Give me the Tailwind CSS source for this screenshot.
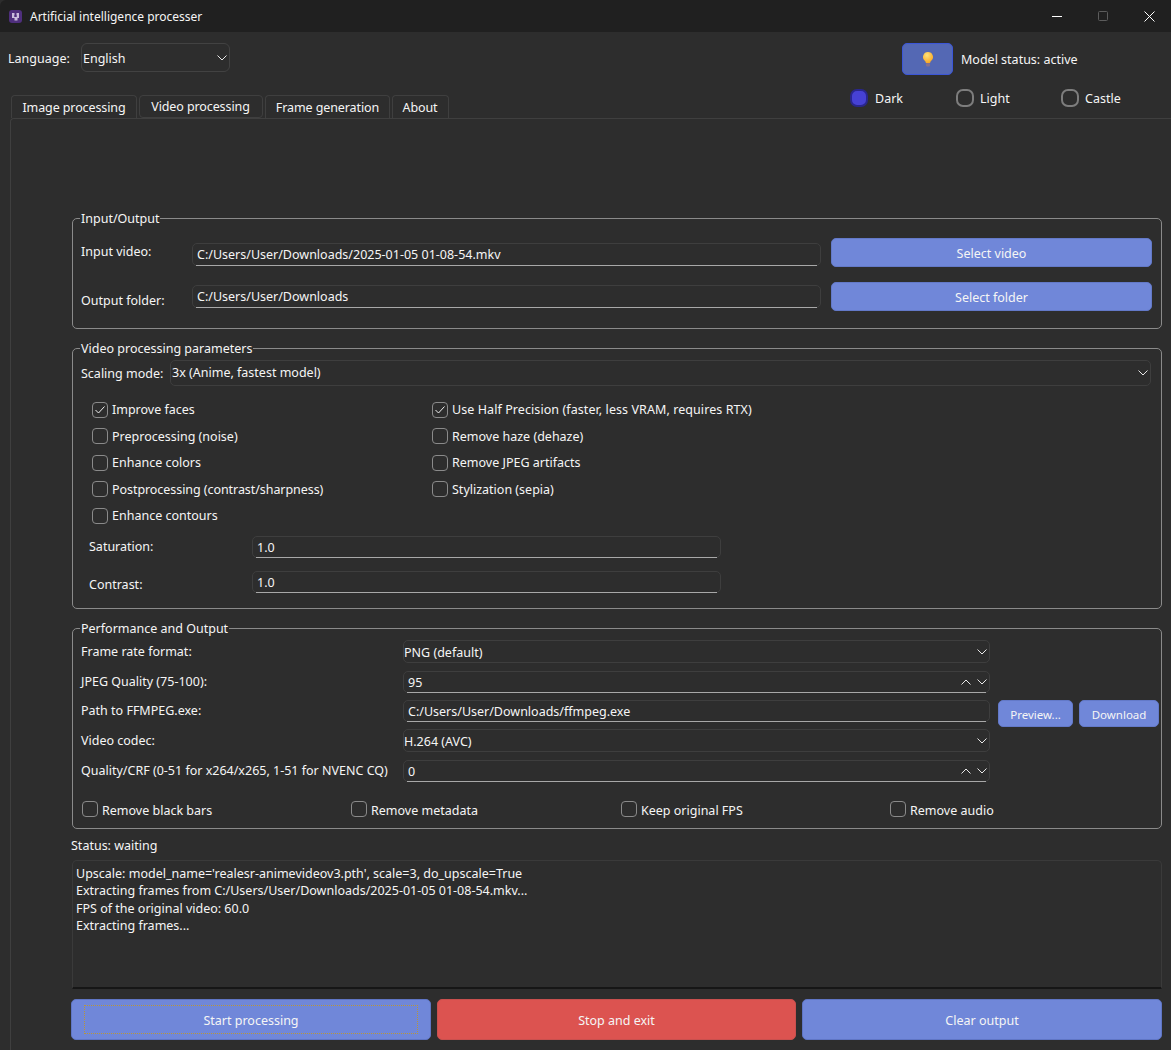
<!DOCTYPE html>
<html lang="en">
<head>
  <meta charset="utf-8" />
  <title>Artificial intelligence processer</title>
  <script src="https://cdn.jsdelivr.net/npm/@tailwindcss/browser@4"></script>
</head>
<body class="bg-[#2d2d2d] text-[#f5f5f5] font-['Noto_Sans',sans-serif] text-[12.5px] leading-[17px] w-[1171px] h-[1050px] overflow-hidden">

  <!-- title bar -->
  <div class="h-8 bg-[#202020] flex items-center pl-[9px] rounded-tl-[6px]">
    <svg width="13" height="13" viewBox="0 0 13 13"><rect width="13" height="13" rx="3" fill="#4f2f7d"/><path d="M3 3h2.5v4h2V3H10v5H8.5v2.5h-3V8H3z" fill="#c9bcdc"/><path d="M5.5 5h2v2h-2z" fill="#4f2f7d"/></svg>
    <span class="ml-2 text-[12px]">Artificial intelligence processer</span>
    <div class="ml-auto flex items-center h-full">
      <svg class="mr-[35px]" width="11" height="11" viewBox="0 0 11 11"><path d="M0 5.5h10" stroke="#fff"/></svg>
      <svg class="mr-[35px]" width="11" height="11" viewBox="0 0 11 11"><rect x=".5" y=".5" width="9" height="9" rx="1" fill="none" stroke="#5c5c5c"/></svg>
      <svg class="mr-[16px]" width="11" height="11" viewBox="0 0 11 11"><path d="M.5.5l10 10M10.5.5l-10 10" stroke="#fff"/></svg>
    </div>
  </div>

  <!-- language + model status -->
  <div class="flex items-start pt-[11px] h-[56px] pl-2">
    <span class="w-[73px] h-[30px] flex items-center">Language:</span>
    <div class="w-[149px] h-[29px] border border-[#424242] rounded-[6px] flex items-center justify-between pl-[1px] pr-[2px]">
      <span class="pt-[2px]">English</span>
      <svg width="10" height="6" viewBox="0 0 10 6"><path d="M.5.5l4.5 4.5 4.5-4.5" fill="none" stroke="#e8e8e8"/></svg>
    </div>
    <div class="ml-[672px] w-[51px] h-[32px] bg-[#5468b4] border border-[#3b56d8] rounded-[5px] flex items-center justify-center">
      <svg width="10" height="15" viewBox="0 0 10 15">
        <defs><radialGradient id="bulb" cx="40%" cy="30%" r="70%"><stop offset="0" stop-color="#ffe27a"/><stop offset="1" stop-color="#f9a825"/></radialGradient></defs>
        <path d="M5 0a5 5 0 0 0-3 9c.5.5.8 1 .8 2h4.400c0-1 .3-1.500.8-2A5 5 0 0 0 5 0z" fill="url(#bulb)"/>
        <rect x="3" y="11" width="4" height="3.500" rx="1" fill="#85708f"/>
      </svg>
    </div>
    <span class="ml-2 h-[32px] flex items-center">Model status: active</span>
  </div>

  <!-- tabs + theme radios -->
  <div class="flex items-end h-[30px] pl-[11px]">
    <div class="flex gap-[2px] tracking-[-0.1px]">
      <div class="w-[126px] h-[23px] border border-[#3f3f3f] border-b-0 rounded-t-[4px] flex items-center justify-center">Image processing</div>
      <div class="w-[124px] h-[23px] border border-[#3f3f3f] rounded-[4px] flex items-center justify-center pb-[1px] pr-[1px]">Video processing</div>
      <div class="w-[125px] h-[23px] border border-[#3f3f3f] border-b-0 rounded-t-[4px] flex items-center justify-center">Frame generation</div>
      <div class="w-[57px] h-[23px] border border-[#3f3f3f] border-b-0 rounded-t-[4px] flex items-center justify-center pr-[1px]">About</div>
    </div>
    <div class="flex items-center self-start ml-[401px] h-[20px]">
      <span class="w-[18px] h-[18px] rounded-[7px] bg-[#4641d4] border-2 border-[#29268c]"></span>
      <span class="ml-[7px] w-[81px]">Dark</span>
      <span class="w-[18px] h-[18px] rounded-[7px] border-2 border-[#7d7d7d]"></span>
      <span class="ml-[6px] w-[81px]">Light</span>
      <span class="w-[18px] h-[18px] rounded-[7px] border-2 border-[#7d7d7d]"></span>
      <span class="ml-[6px]">Castle</span>
    </div>
  </div>

  <!-- tab pane -->
  <div class="ml-[10px] h-[932px] border-t border-l border-[#3f3f3f] rounded-tl-[4px] pl-[61px] pt-[99px] pr-[9px]">

    <!-- Input/Output -->
    <div class="relative h-[111px] border border-[#8a8a8a] rounded-[5px] pl-2 pt-[19px]">
      <span class="absolute -top-[9px] left-[7px] px-[1px] bg-[#2d2d2d]">Input/Output</span>
      <div class="flex items-start h-[44px]">
        <span class="w-[111px] pt-[5px]">Input video:</span>
        <div class="relative w-[629px] h-[23px] mt-[5px] border border-[#3e3e3e] rounded-[5px] px-1 flex items-center after:absolute after:left-[3px] after:right-[3px] after:-bottom-[1px] after:h-[1px] after:bg-[#a8a8a8]">C:/Users/User/Downloads/2025-01-05 01-08-54.mkv</div>
        <div class="ml-[10px] w-[321px] h-[29px] pt-[1px] bg-[#7087d9] border border-[#6379c8] rounded-[5px] flex items-center justify-center">Select video</div>
      </div>
      <div class="flex items-start">
        <span class="w-[111px] pt-[10px]">Output folder:</span>
        <div class="relative w-[629px] h-[23px] mt-[3px] border border-[#3e3e3e] rounded-[5px] px-1 flex items-center after:absolute after:left-[3px] after:right-[3px] after:-bottom-[1px] after:h-[1px] after:bg-[#a8a8a8]">C:/Users/User/Downloads</div>
        <div class="ml-[10px] w-[321px] h-[29px] pt-[1px] bg-[#7087d9] border border-[#6379c8] rounded-[5px] flex items-center justify-center">Select folder</div>
      </div>
    </div>

    <!-- Video processing parameters -->
    <div class="relative mt-[19px] h-[261px] border border-[#8a8a8a] rounded-[5px] pl-2 pt-[11px]">
      <span class="absolute -top-[9px] left-[7px] px-[1px] bg-[#2d2d2d]">Video processing parameters</span>
      <div class="flex items-center">
        <span class="w-[89px]">Scaling mode:</span>
        <div class="w-[981px] h-[26px] border border-[#3e3e3e] rounded-[5px] flex items-center justify-between pl-[1px] pr-[2px]">
          <span class="pb-[1px]">3x (Anime, fastest model)</span>
          <svg width="10" height="6" viewBox="0 0 10 6"><path d="M.5.5l4.500 4.500 4.500-4.500" fill="none" stroke="#e8e8e8"/></svg>
        </div>
      </div>
      <div class="grid grid-cols-[340px_1fr] auto-rows-[26.5px] pl-[11px] mt-[10.5px]">
        <label class="flex items-center gap-1"><span class="w-4 h-4 rounded-[4px] border border-[#8a8a8a] flex items-center justify-center"><svg width="10" height="8" viewBox="0 0 10 8"><path d="M.5 4l3 3 6-6.500" fill="none" stroke="#f0f0f0"/></svg></span>Improve faces</label>
        <label class="flex items-center gap-1 tracking-[0.08px]"><span class="w-4 h-4 rounded-[4px] border border-[#8a8a8a] flex items-center justify-center"><svg width="10" height="8" viewBox="0 0 10 8"><path d="M.5 4l3 3 6-6.500" fill="none" stroke="#f0f0f0"/></svg></span>Use Half Precision (faster, less VRAM, requires RTX)</label>
        <label class="flex items-center gap-1"><span class="w-4 h-4 rounded-[4px] border border-[#8a8a8a]"></span>Preprocessing (noise)</label>
        <label class="flex items-center gap-1"><span class="w-4 h-4 rounded-[4px] border border-[#8a8a8a]"></span>Remove haze (dehaze)</label>
        <label class="flex items-center gap-1"><span class="w-4 h-4 rounded-[4px] border border-[#8a8a8a]"></span>Enhance colors</label>
        <label class="flex items-center gap-1"><span class="w-4 h-4 rounded-[4px] border border-[#8a8a8a]"></span>Remove JPEG artifacts</label>
        <label class="flex items-center gap-1 tracking-[-0.06px]"><span class="w-4 h-4 rounded-[4px] border border-[#8a8a8a]"></span>Postprocessing (contrast/sharpness)</label>
        <label class="flex items-center gap-1"><span class="w-4 h-4 rounded-[4px] border border-[#8a8a8a]"></span>Stylization (sepia)</label>
        <label class="flex items-center gap-1"><span class="w-4 h-4 rounded-[4px] border border-[#8a8a8a]"></span>Enhance contours</label>
      </div>
      <div class="flex items-center mt-[7px] pl-2">
        <span class="w-[163px] pb-[2px]">Saturation:</span>
        <div class="relative w-[469px] h-[22px] border border-[#3e3e3e] rounded-[5px] px-1 flex items-center after:absolute after:left-[3px] after:right-[3px] after:-bottom-[1px] after:h-[1px] after:bg-[#a8a8a8]">1.0</div>
      </div>
      <div class="flex items-center mt-[13px] pl-2">
        <span class="w-[163px] pt-[5px]">Contrast:</span>
        <div class="relative w-[469px] h-[22px] border border-[#3e3e3e] rounded-[5px] px-1 flex items-center after:absolute after:left-[3px] after:right-[3px] after:-bottom-[1px] after:h-[1px] after:bg-[#a8a8a8]">1.0</div>
      </div>
    </div>

    <!-- Performance and Output -->
    <div class="relative mt-[19px] h-[201px] border border-[#8a8a8a] rounded-[5px] pl-2 pt-[11px]">
      <span class="absolute -top-[9px] left-[7px] px-[1px] bg-[#2d2d2d]">Performance and Output</span>
      <div class="flex items-center h-[23px]">
        <span class="w-[322px] pb-[1px]">Frame rate format:</span>
        <div class="w-[587px] h-[23px] border border-[#3e3e3e] rounded-[5px] flex items-center justify-between pr-[2px]">
          <span class="pt-[1px]">PNG (default)</span>
          <svg width="10" height="6" viewBox="0 0 10 6"><path d="M.5.5l4.500 4.500 4.500-4.500" fill="none" stroke="#e8e8e8"/></svg>
        </div>
      </div>
      <div class="flex items-center h-[22px] mt-[8px]">
        <span class="w-[322px] pb-[2px]">JPEG Quality (75-100):</span>
        <div class="relative w-[587px] h-[22px] border border-[#3e3e3e] rounded-[5px] flex items-center justify-between pl-1 pr-[2px] after:absolute after:left-[3px] after:right-[3px] after:-bottom-[1px] after:h-[1px] after:bg-[#a8a8a8]">
          <span>95</span>
          <span class="flex gap-[6px]">
            <svg width="10" height="6" viewBox="0 0 10 6"><path d="M.5 5.500l4.500-4.500 4.500 4.500" fill="none" stroke="#e8e8e8"/></svg>
            <svg width="10" height="6" viewBox="0 0 10 6"><path d="M.5.5l4.500 4.500 4.500-4.500" fill="none" stroke="#e8e8e8"/></svg>
          </span>
        </div>
      </div>
      <div class="flex items-center h-[22px] mt-[7px]">
        <span class="w-[322px] pb-[2px]">Path to FFMPEG.exe:</span>
        <div class="relative w-[587px] h-[22px] border border-[#3e3e3e] rounded-[5px] px-1 flex items-center after:absolute after:left-[3px] after:right-[3px] after:-bottom-[1px] after:h-[1px] after:bg-[#a8a8a8]">C:/Users/User/Downloads/ffmpeg.exe</div>
        <div class="ml-2 w-[75px] h-[27px] mt-[5px] pt-[1px] bg-[#7087d9] border border-[#6379c8] rounded-[5px] flex items-center justify-center text-[11.5px]">Preview...</div>
        <div class="ml-[6px] w-[80px] h-[27px] mt-[5px] pt-[1px] bg-[#7087d9] border border-[#6379c8] rounded-[5px] flex items-center justify-center text-[11.5px]">Download</div>
      </div>
      <div class="flex items-center h-[23px] mt-[7px]">
        <span class="w-[322px]">Video codec:</span>
        <div class="w-[587px] h-[23px] border border-[#3e3e3e] rounded-[5px] flex items-center justify-between pr-[2px]">
          <span class="pt-[1px]">H.264 (AVC)</span>
          <svg width="10" height="6" viewBox="0 0 10 6"><path d="M.5.5l4.500 4.500 4.500-4.500" fill="none" stroke="#e8e8e8"/></svg>
        </div>
      </div>
      <div class="flex items-center h-[22px] mt-[8px]">
        <span class="w-[322px] pb-[2px]">Quality/CRF (0-51 for x264/x265, 1-51 for NVENC CQ)</span>
        <div class="relative w-[587px] h-[22px] border border-[#3e3e3e] rounded-[5px] flex items-center justify-between pl-1 pr-[2px] after:absolute after:left-[3px] after:right-[3px] after:-bottom-[1px] after:h-[1px] after:bg-[#a8a8a8]">
          <span class="pt-[1px]">0</span>
          <span class="flex gap-[6px]">
            <svg width="10" height="6" viewBox="0 0 10 6"><path d="M.5 5.500l4.500-4.500 4.500 4.500" fill="none" stroke="#e8e8e8"/></svg>
            <svg width="10" height="6" viewBox="0 0 10 6"><path d="M.5.5l4.500 4.500 4.500-4.500" fill="none" stroke="#e8e8e8"/></svg>
          </span>
        </div>
      </div>
      <div class="grid grid-cols-[269px_270px_269px_1fr] mt-[19px] pl-[1px]">
        <label class="flex items-start gap-1"><span class="w-4 h-4 rounded-[4px] border border-[#8a8a8a]"></span><span class="pt-[1px]">Remove black bars</span></label>
        <label class="flex items-start gap-1"><span class="w-4 h-4 rounded-[4px] border border-[#8a8a8a]"></span><span class="pt-[1px]">Remove metadata</span></label>
        <label class="flex items-start gap-1"><span class="w-4 h-4 rounded-[4px] border border-[#8a8a8a]"></span><span class="pt-[1px]">Keep original FPS</span></label>
        <label class="flex items-start gap-1"><span class="w-4 h-4 rounded-[4px] border border-[#8a8a8a]"></span><span class="pt-[1px]">Remove audio</span></label>
      </div>
    </div>

    <!-- status + log -->
    <div class="mt-[8px] h-[17px] -ml-[1px]">Status: waiting</div>
    <div class="mt-[6px] h-[129px] border border-[#3a3a3a] border-b-2 border-b-[#161616] rounded-t-[5px] pl-[3px] pt-[4px] leading-[17.3px]">
      <p>Upscale: model_name='realesr-animevideov3.pth', scale=3, do_upscale=True</p>
      <p>Extracting frames from C:/Users/User/Downloads/2025-01-05 01-08-54.mkv...</p>
      <p>FPS of the original video: 60.0</p>
      <p>Extracting frames...</p>
    </div>

    <!-- bottom buttons -->
    <div class="mt-[10px] -ml-[1px] flex gap-[6px]">
      <div class="w-[360px] h-[41px] bg-[#7087d9] border border-[#5f75c4] rounded-[5px] py-[5px] px-3">
        <div class="h-full pt-[1px] border border-dotted border-[#b8963a] flex items-center justify-center">Start processing</div>
      </div>
      <div class="w-[359px] h-[41px] pt-[1px] bg-[#dc5350] border border-[#c9504e] rounded-[5px] flex items-center justify-center">Stop and exit</div>
      <div class="w-[360px] h-[41px] pt-[1px] bg-[#7087d9] border border-[#5f75c4] rounded-[5px] flex items-center justify-center">Clear output</div>
    </div>
  </div>

</body>
</html>
